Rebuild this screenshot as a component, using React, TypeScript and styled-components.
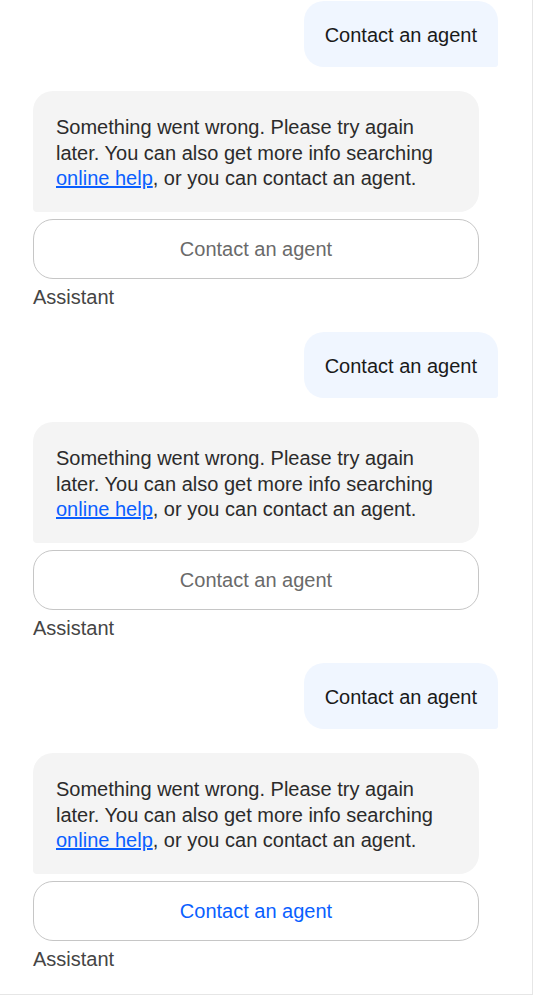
import { Fragment } from 'react';
import styled, { createGlobalStyle } from 'styled-components';

const GlobalStyle = createGlobalStyle`
  body {
    margin: 0;
    background: #ffffff;
    font-family: 'Liberation Sans', Arial, Helvetica, sans-serif;
  }
`;

const StChat = styled.div`
  width: 533px;
  box-sizing: border-box;
  padding: 1px 34px 22px 33px;
  border-right: 1px solid #e6e6e6;
  border-bottom: 1px solid #e6e6e6;
  display: flex;
  flex-direction: column;
`;

const UserBubble = styled.div`
  align-self: flex-end;
  box-sizing: border-box;
  height: 66px;
  padding: 2px 21px 0;
  display: flex;
  align-items: center;
  background: #f0f6ff;
  color: #1a1a1a;
  font-size: 20px;
  border-radius: 20px 20px 3px 20px;
  margin-bottom: 24px;
`;

const AssistantBlock = styled.div<{ $last?: boolean }>`
  width: 446px;
  display: flex;
  flex-direction: column;
  margin-bottom: ${({ $last }) => ($last ? '0' : '22px')};
`;

const AssistantBubble = styled.div`
  box-sizing: border-box;
  height: 121px;
  padding: 24px 23px 0;
  background: #f4f4f4;
  color: #2b2b2b;
  font-size: 20px;
  line-height: 25.5px;
  border-radius: 20px 20px 20px 4px;

  a {
    color: #0a5fff;
    text-decoration: underline;
  }
`;

const AgentButton = styled.button<{ $active?: boolean }>`
  margin-top: 7px;
  height: 60px;
  width: 100%;
  background: #ffffff;
  border: 1px solid #c6c6c6;
  border-radius: 20px;
  font-family: inherit;
  font-size: 20px;
  color: ${({ $active }) => ($active ? '#0a5fff' : '#6a6a6a')};
  cursor: pointer;
`;

const SenderLabel = styled.div`
  margin-top: 6px;
  font-size: 20px;
  line-height: 25px;
  color: #454545;
`;

const conversation = [false, false, true];

const App = () => {
  return (
    <>
      <GlobalStyle />
      <StChat>
        {conversation.map((active, i) => (
          <Fragment key={i}>
            <UserBubble>Contact an agent</UserBubble>
            <AssistantBlock $last={i === conversation.length - 1}>
              <AssistantBubble>
                Something went wrong. Please try again later. You can also get more info searching{' '}
                <a href='#'>online help</a>, or you can contact an agent.
              </AssistantBubble>
              <AgentButton type='button' $active={active}>
                Contact an agent
              </AgentButton>
              <SenderLabel>Assistant</SenderLabel>
            </AssistantBlock>
          </Fragment>
        ))}
      </StChat>
    </>
  );
};

export default App;
